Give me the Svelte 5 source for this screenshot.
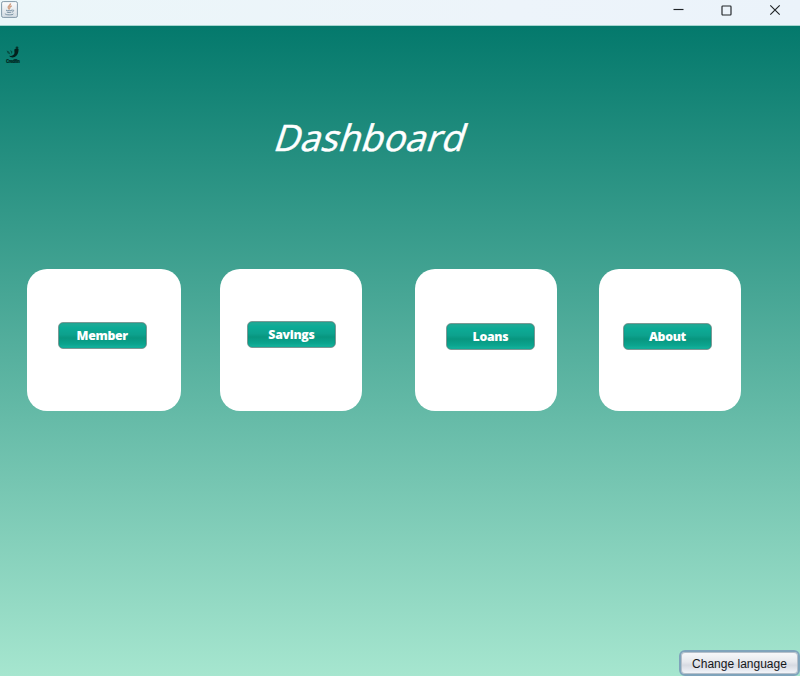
<script>
  const cards = [
    { label: 'Member', width: 154, gap: 0, left: 30.5, top: 53 },
    { label: 'Savings', width: 142, gap: 38.6, left: 27.2, top: 52 },
    { label: 'Loans', width: 142, gap: 53.2, left: 31, top: 54 },
    { label: 'About', width: 142, gap: 41.8, left: 24.2, top: 54 }
  ];
</script>

<div class="window">
  <header>
    <svg class="java" width="17" height="17" viewBox="0 0 17 17">
      <defs>
        <linearGradient id="jg" x1="0" y1="0" x2="0" y2="1">
          <stop offset="0" stop-color="#fdfdfd" />
          <stop offset="1" stop-color="#d3dce3" />
        </linearGradient>
      </defs>
      <rect x=".6" y=".6" width="15.8" height="15.8" rx="1.6" fill="url(#jg)" stroke="#8299a8" />
      <path d="M9.5 2.4C10 4.2 6.6 5 7.2 6.6 7.4 7.3 8.2 7.8 8.4 8.6M10.8 4.8C8.6 5.7 8.5 6.5 9.2 7.5" fill="none" stroke="#d0a084" stroke-width="1.4" />
      <path d="M5 9.2C6.8 10 9.7 9.8 11 9.1M5.8 11.1Q8.2 12 10.4 11.1M11.2 9.1C13.5 8.6 12.8 10.7 11 11.1M4.3 12.6C2.9 14 11.9 14.4 12.4 12.9" fill="none" stroke="#7690a2" />
    </svg>
    <div class="controls">
      <svg width="10" height="10" viewBox="0 0 10 10"><path d="M.5 4.5H10.5" /></svg>
      <svg width="11" height="11" viewBox="0 0 11 11"><rect x="1" y="1" width="9" height="9" rx=".7" /></svg>
      <svg width="10" height="10" viewBox="0 0 10 10"><path d="M.3.3L9.7 9.7M9.7.3L.3 9.7" /></svg>
    </div>
  </header>
  <main>
    <div class="brand">
      <svg width="14" height="13" viewBox="0 0 14 13">
        <path d="M8.3 3.6C9.6 2.4 12 2.3 12.6 3.2L12.3 6C11.8 8.8 9.6 11.2 6.6 11.6 5 11.5 3.8 10.7 3.2 9.8 6 10.4 8.2 9 8.5 7Z" fill="#03201c" />
        <circle cx="11" cy="1.8" r="1.4" fill="#04332c" />
        <path d="M.6 4.6L3 5.4 4.5 8.6 1.7 7.2ZM4.2 3.8L6.4 5.8 5.7 8.2Z" fill="#064b40" />
      </svg>
      <span>Credfin</span>
    </div>
    <h1>Dashboard</h1>
    <section>
      {#each cards as card}
        <div class="card" style="width:{card.width}px;margin-left:{card.gap}px;padding:{card.top}px 0 0 {card.left}px">
          <button>{card.label}</button>
        </div>
      {/each}
    </section>
    <footer><button class="language">Change language</button></footer>
  </main>
</div>

<style>
  :global(body) { margin: 0; }
  * { box-sizing: border-box; }
  .window { width: 800px; height: 676px; overflow: hidden; display: flex; flex-direction: column; }
  header {
    height: 26px; flex: none; display: flex; justify-content: space-between;
    background: linear-gradient(90deg, #ebf6f9, #edf4fa 65%, #ebf3fa);
    border-bottom: 1px solid #a6d6d0;
  }
  .java { margin: 1px 0 0 1px; }
  .controls { display: flex; align-items: center; gap: 38px; height: 20px; padding-right: 20px; }
  .controls svg { overflow: visible; fill: none; stroke: #202427; stroke-width: 1.15; }
  main {
    flex: 1; min-height: 0; display: flex; flex-direction: column;
    background: linear-gradient(#04796c, #a6e6cf);
  }
  .brand { height: 40px; padding: 20px 0 0 6px; display: flex; flex-direction: column; flex: none; }
  .brand svg { flex: none; }
  .brand span { font: 800 4.3px/5px "Open Sans", sans-serif; color: #022d27; letter-spacing: -.4px; -webkit-text-stroke: .2px #022d27; }
  h1 {
    margin: 44px 0 0 271.5px; width: 200px; height: 54px; flex: none; white-space: nowrap;
    font: 400 36.5px/54px "Open Sans", sans-serif; color: #fff; letter-spacing: .2px;
    -webkit-text-stroke: .5px #fff;
    transform: skewX(-18deg); transform-origin: 0 41px;
  }
  section { display: flex; margin: 105px 0 0 27.2px; height: 142px; flex: none; }
  .card { height: 142px; flex: none; background: #fff; border-radius: 20px; }
  button {
    display: block; width: 89px; height: 27px; padding: 0;
    border: 1px solid #7c9a95; border-radius: 5px;
    background: linear-gradient(#25a996 0, #0dab96 18%, #0da18d 46%, #08967f 60%, #0ba48e 85%, #16b49f 100%);
    box-shadow: inset 0 0 1px #087b6e;
    color: #fff; font: 800 12.3px/25px "Open Sans", sans-serif; letter-spacing: -.3px; text-align: center;
  }
  footer { margin-top: auto; display: flex; justify-content: flex-end; }
  .language {
    width: 121px; height: 26px; padding: 1px 0 0; border: 2px solid #7fa3bb; border-radius: 6px;
    background: linear-gradient(#f8f9fb, #e6e8ed 45%, #d7dae2 60%, #f5f7fc);
    box-shadow: inset 0 0 0 1px #b5bfca;
    color: #15171a; font: 12px/22px "Liberation Sans", Arial, sans-serif; letter-spacing: 0;
  }
</style>
